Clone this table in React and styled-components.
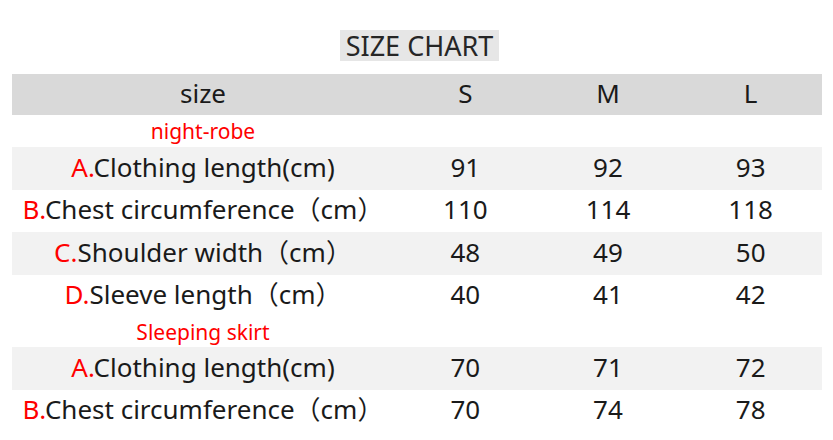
import React from 'react'
import styled, { createGlobalStyle } from 'styled-components'

const GlobalStyle = createGlobalStyle`
    html, body {
        margin: 0;
        padding: 0;
        background: #fff;
    }
    body {
        font-family: "Noto Sans", "Noto Sans CJK SC", sans-serif;
        color: #1a1a1a;
    }
`

const sections = [
    {
        name: 'night-robe',
        rows: [
            { mark: 'A.', label: 'Clothing length(cm)', values: [91, 92, 93] },
            { mark: 'B.', label: 'Chest circumference（cm）', values: [110, 114, 118] },
            { mark: 'C.', label: 'Shoulder width（cm）', values: [48, 49, 50] },
            { mark: 'D.', label: 'Sleeve length（cm）', values: [40, 41, 42] },
        ],
    },
    {
        name: 'Sleeping skirt',
        rows: [
            { mark: 'A.', label: 'Clothing length(cm)', values: [70, 71, 72] },
            { mark: 'B.', label: 'Chest circumference（cm）', values: [70, 74, 78] },
        ],
    },
]

const App = () => {
    return (
        <Page>
            <GlobalStyle />
            <TitleWrap>
                <Title>SIZE CHART</Title>
            </TitleWrap>
            <Table>
                <Row $tone="head" $height={41}>
                    <Cell>size</Cell>
                    <Cell>S</Cell>
                    <Cell>M</Cell>
                    <Cell>L</Cell>
                </Row>
                {sections.map((section) => (
                    <React.Fragment key={section.name}>
                        <Row $height={section.name === 'night-robe' ? 32 : 30}>
                            <SectionName>{section.name}</SectionName>
                        </Row>
                        {section.rows.map((row, i) => (
                            <Row key={row.mark} $tone={i % 2 === 0 ? 'light' : 'white'} $height={i % 2 === 0 ? 43 : 42}>
                                <Cell>
                                    <Mark>{row.mark}</Mark>{row.label}
                                </Cell>
                                {row.values.map((v, j) => (
                                    <Cell key={j}>{v}</Cell>
                                ))}
                            </Row>
                        ))}
                    </React.Fragment>
                ))}
            </Table>
        </Page>
    )
}

export default App

const Page = styled.div`
    width: 833px;
    height: 440px;
    padding: 30px 11px 0 12px;
    box-sizing: border-box;
    overflow: hidden;
`

const TitleWrap = styled.div`
    display: flex;
    justify-content: center;
    padding-left: 5px;
    margin-bottom: 13px;
`

const Title = styled.div`
    background: #e6e6e6;
    font-size: 27px;
    line-height: 31px;
    padding: 0 6px;
    color: #262626;
`

const Table = styled.div`
    display: flex;
    flex-direction: column;
`

const tones = {
    head: '#d9d9d9',
    light: '#f2f2f2',
    white: '#ffffff',
}

const Row = styled.div`
    display: grid;
    grid-template-columns: 382px repeat(3, 1fr);
    align-items: center;
    height: ${(p) => p.$height}px;
    background: ${(p) => tones[p.$tone] || '#fff'};
`

const Cell = styled.div`
    text-align: center;
    font-size: 26px;
    line-height: 30px;
    padding-bottom: 4px;
    white-space: nowrap;
`

const Mark = styled.span`
    color: #ff0000;
`

const SectionName = styled.div`
    text-align: center;
    font-size: 21px;
    line-height: 24px;
    color: #ff0000;
`
